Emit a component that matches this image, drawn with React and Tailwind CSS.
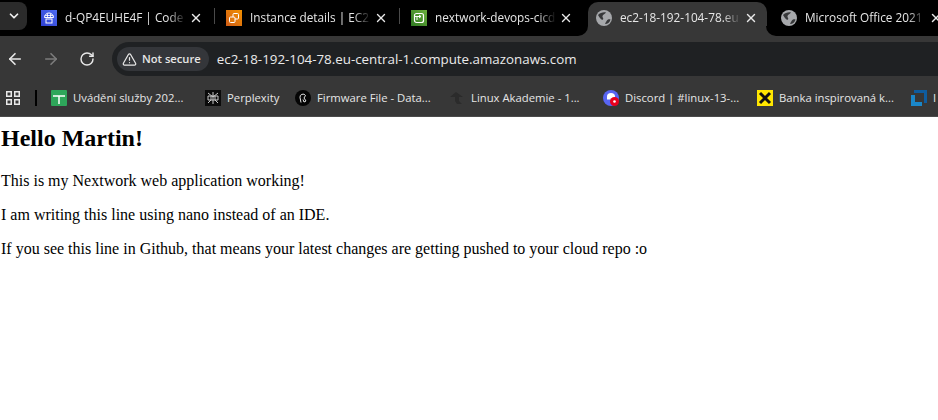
import { ChevronDown, X, ArrowLeft, ArrowRight, RotateCw, TriangleAlert } from 'lucide-react';

const chromeFont = { fontFamily: '"Open Sans", "Noto Sans", sans-serif' };

// ── Favicons ───────────────────────────────────────────────────────────────────
function GlobeIcon() {
  return (
    <svg width="16" height="16" viewBox="0 0 16 16">
      <circle cx="8" cy="8" r="8" fill="#a6a8ab" />
      <path d="M2 5c2-2 5-3 8-2.5-1 1.5-3 2-3.500 3.500C6 7.500 8 8 7 9.500 6 10.500 4 8.500 2 5z" fill="#37383a" />
      <path d="M9 14c1-2 1.500-3.500 3-4.500 1-.5 2-.5 2.500 0C14 12 12 14 9 14z" fill="#37383a" />
    </svg>
  );
}

function CodeIcon() {
  return (
    <svg width="16" height="16" viewBox="0 0 16 16">
      <defs>
        <linearGradient id="code-bg" x1="0" y1="1" x2="1" y2="0">
          <stop offset="0" stopColor="#2e3fd0" />
          <stop offset="1" stopColor="#4d6bf0" />
        </linearGradient>
      </defs>
      <rect width="16" height="16" fill="url(#code-bg)" />
      <path d="M3.500 7.500a4.500 4.500 0 0 1 9 0z" fill="none" stroke="#fff" strokeWidth="1" />
      <path d="M6.500 3.500v4M9.500 3.500v4M3.800 5.500h8.400" stroke="#fff" strokeWidth="0.8" />
      <rect x="5" y="9" width="6" height="4" fill="none" stroke="#fff" strokeWidth="1" />
    </svg>
  );
}

function Ec2Icon() {
  return (
    <svg width="16" height="16" viewBox="0 0 16 16">
      <defs>
        <linearGradient id="ec2-bg" x1="0" y1="1" x2="1" y2="0">
          <stop offset="0" stopColor="#d05c17" />
          <stop offset="1" stopColor="#f29100" />
        </linearGradient>
      </defs>
      <rect width="16" height="16" fill="url(#ec2-bg)" />
      <rect x="7" y="3.500" width="5.500" height="5.500" rx="1" fill="none" stroke="#fff" strokeWidth="1" />
      <rect x="3.500" y="7" width="5.500" height="5.500" rx="1" fill="#e27a10" stroke="#fff" strokeWidth="1" />
    </svg>
  );
}

function PipelineIcon() {
  return (
    <svg width="16" height="16" viewBox="0 0 16 16">
      <defs>
        <linearGradient id="pipe-bg" x1="0" y1="1" x2="1" y2="0">
          <stop offset="0" stopColor="#2f7a22" />
          <stop offset="1" stopColor="#6bae3c" />
        </linearGradient>
      </defs>
      <rect width="16" height="16" fill="url(#pipe-bg)" />
      <rect x="3.500" y="3.500" width="9" height="9" rx="2" fill="none" stroke="#fff" strokeWidth="1.2" />
      <path d="M3.500 6.500H10M10 6.500l-2-1.500M10 6.500L8 8M6 6.500V10" fill="none" stroke="#fff" strokeWidth="1" />
    </svg>
  );
}

function DocsIcon() {
  return (
    <svg width="16" height="16" viewBox="0 0 16 16">
      <rect width="16" height="16" rx="1" fill="#2ea65a" />
      <path d="M2 6h12M8 6v8" stroke="#fff" strokeWidth="1.500" />
    </svg>
  );
}

function PerplexityIcon() {
  return (
    <svg width="16" height="16" viewBox="0 0 16 16">
      <rect width="16" height="16" fill="#0b0b0b" />
      <path d="M3 3l5 4 5-4M3 13l3-3V6M13 13l-3-3V6M8 2v12M3 6h10v4H3z" fill="none" stroke="#c9c9c9" strokeWidth="1" />
    </svg>
  );
}

function FirmwareIcon() {
  return (
    <svg width="16" height="16" viewBox="0 0 16 16">
      <circle cx="8" cy="8" r="8" fill="#050505" />
      <path d="M6 12.500L5 7.500a3 3 0 0 1 5.500-2L9 8l2 3-2 1-1-2.500" fill="none" stroke="#e5e5e5" strokeWidth="1" />
    </svg>
  );
}

function AkademieIcon() {
  return (
    <svg width="16" height="16" viewBox="0 0 16 16">
      <path d="M1 7l6-5 7 5h-4v4l3 3H8L6 11V7z" fill="#2b2b2b" />
    </svg>
  );
}

function DiscordIcon() {
  return (
    <svg width="16" height="16" viewBox="0 0 16 16">
      <circle cx="8" cy="8" r="8" fill="#5865f2" />
      <path d="M4 6.500a4 3.500 0 0 1 8 0v3H4z" fill="#fff" />
      <circle cx="11.500" cy="11.500" r="4.500" fill="#e8001c" />
      <circle cx="11.500" cy="11.500" r="1.300" fill="#fff" />
    </svg>
  );
}

function RaiffeisenIcon() {
  return (
    <svg width="16" height="16" viewBox="0 0 16 16">
      <rect width="16" height="16" fill="#ffe600" />
      <path d="M3 3l10 10M13 3L3 13" stroke="#111" strokeWidth="3" />
    </svg>
  );
}

function BlueIcon() {
  return (
    <svg width="16" height="16" viewBox="0 0 16 16">
      <path d="M0 5h4v7h7v4H0z" fill="#1a87c9" />
      <path d="M3 0h13v13h-3V3H3z" fill="#0f5c9e" />
    </svg>
  );
}

function AppsIcon() {
  return (
    <svg width="14" height="14" viewBox="0 0 14 14" fill="none" stroke="#e8e8e8" strokeWidth="1.500">
      <rect x="0.750" y="0.750" width="4.500" height="4.500" />
      <rect x="8.750" y="0.750" width="4.500" height="4.500" />
      <rect x="0.750" y="8.750" width="4.500" height="4.500" />
      <rect x="8.750" y="8.750" width="4.500" height="4.500" />
    </svg>
  );
}

// ── Browser chrome ─────────────────────────────────────────────────────────────
const tabs = [
  { title: 'd-QP4EUHE4F | Code', icon: <CodeIcon /> },
  { title: 'Instance details | EC2', icon: <Ec2Icon /> },
  { title: 'nextwork-devops-cicd', icon: <PipelineIcon /> },
  { title: 'ec2-18-192-104-78.eu', icon: <GlobeIcon />, active: true },
  { title: 'Microsoft Office 2021', icon: <GlobeIcon /> },
];

const bookmarks = [
  { title: 'Uvádění služby 202...', icon: <DocsIcon />, width: 'w-[154px]' },
  { title: 'Perplexity', icon: <PerplexityIcon />, width: 'w-[90px]' },
  { title: 'Firmware File - Data...', icon: <FirmwareIcon />, width: 'w-[154px]' },
  { title: 'Linux Akademie - 1...', icon: <AkademieIcon />, width: 'w-[154px]' },
  { title: 'Discord | #linux-13-...', icon: <DiscordIcon />, width: 'w-[154px]' },
  { title: 'Banka inspirovaná k...', icon: <RaiffeisenIcon />, width: 'w-[154px]' },
  { title: 'I', icon: <BlueIcon />, width: 'w-[27px]' },
];

function Tab({ title, icon, active, showDivider }) {
  return (
    <div className="relative flex h-[36px] w-[185px] shrink-0 items-center pl-[9px]">
      {active && (
        <>
          <span className="absolute inset-y-0 left-[1px] right-[5px] mt-[2px] rounded-t-[10px] bg-[#373737]" />
          <span className="absolute bottom-0 left-[-9px] h-[10px] w-[10px] bg-[#373737]">
            <span className="block h-full w-full rounded-br-[10px] bg-black" />
          </span>
          <span className="absolute bottom-0 right-[-4px] h-[10px] w-[10px] bg-[#373737]">
            <span className="block h-full w-full rounded-bl-[10px] bg-black" />
          </span>
        </>
      )}
      <span className="relative flex w-[16px] shrink-0">{icon}</span>
      <span className="relative ml-[8px] w-[121px] overflow-hidden whitespace-nowrap text-[11.8px] text-[#e6e6e6] [mask-image:linear-gradient(to_right,black_85%,transparent)]">{title}</span>
      <X size={14} strokeWidth={2.4} color="#e8e8e8" className="relative ml-[3px] shrink-0" />
      {showDivider && <span className="absolute right-[2px] top-[8px] h-[16px] w-px bg-[#4a4a4a]" />}
    </div>
  );
}

export default function App() {
  return (
    <div className="h-[420px] w-[938px] overflow-hidden bg-white">
      <div style={chromeFont}>
        {/* Tab strip */}
        <div className="flex h-[36px] items-start overflow-hidden bg-black">
          <div className="mt-[2px] flex h-[28px] w-[27px] shrink-0 items-center justify-center rounded-r-[8px] bg-[#2b2b2b]">
            <ChevronDown size={14} strokeWidth={3} color="#f0f0f0" />
          </div>
          <div className="ml-[5px] flex">
            {tabs.map((tab, i) => (
              <Tab key={tab.title} {...tab} showDivider={i < 2} />
            ))}
          </div>
        </div>

        {/* Toolbar */}
        <div className="flex h-[44px] items-start bg-[#373737] pt-[6px]">
          <div className="flex h-[34px] items-center">
            <ArrowLeft size={18} strokeWidth={2.2} color="#e8e8e8" className="ml-[6px]" />
            <ArrowRight size={18} strokeWidth={2.2} color="#7c7c7c" className="ml-[18px]" />
            <RotateCw size={16} strokeWidth={2.2} color="#e8e8e8" className="ml-[19px]" />
          </div>
          <div className="ml-[17px] flex h-[34px] flex-1 items-center rounded-l-full bg-[#1f2123] pl-[5px]">
            <div className="flex h-[24px] items-center gap-[5px] rounded-full bg-[#34363a] pl-[5px] pr-[8px]">
              <TriangleAlert size={15} color="#e8e8e8" />
              <span className="text-[11.2px] font-semibold text-[#e6e6e6]">Not secure</span>
            </div>
            <span className="ml-[8px] text-[13.35px] text-[#eaeaea]">ec2-18-192-104-78.eu-central-1.compute.amazonaws.com</span>
          </div>
        </div>

        {/* Bookmarks bar */}
        <div className="flex h-[37px] items-center overflow-hidden border-b border-[#4a4a4a] bg-[#373737]">
          <span className="ml-[6px] flex shrink-0"><AppsIcon /></span>
          <span className="ml-[15px] h-[16px] w-[2px] shrink-0 bg-black" />
          <div className="ml-[14px] flex">
            {bookmarks.map(({ title, icon, width }) => (
              <div key={title} className={`flex shrink-0 items-center gap-[6px] ${width}`}>
                <span className="flex w-[16px] shrink-0">{icon}</span>
                <span className="whitespace-nowrap text-[11.3px] text-[#e6e6e6]">{title}</span>
              </div>
            ))}
          </div>
        </div>
      </div>

      {/* Page */}
      <div className="px-[1px] text-[16px] leading-[18px] text-black" style={{ fontFamily: '"Liberation Serif", serif' }}>
        <h1 className="mt-[8px] text-[24px] font-bold leading-[27px]">Hello Martin!</h1>
        <p className="mt-[20px]">This is my Nextwork web application working!</p>
        <p className="mt-[16px]">I am writing this line using nano instead of an IDE.</p>
        <p className="mt-[16px]">If you see this line in Github, that means your latest changes are getting pushed to your cloud repo :o</p>
      </div>
    </div>
  );
}
